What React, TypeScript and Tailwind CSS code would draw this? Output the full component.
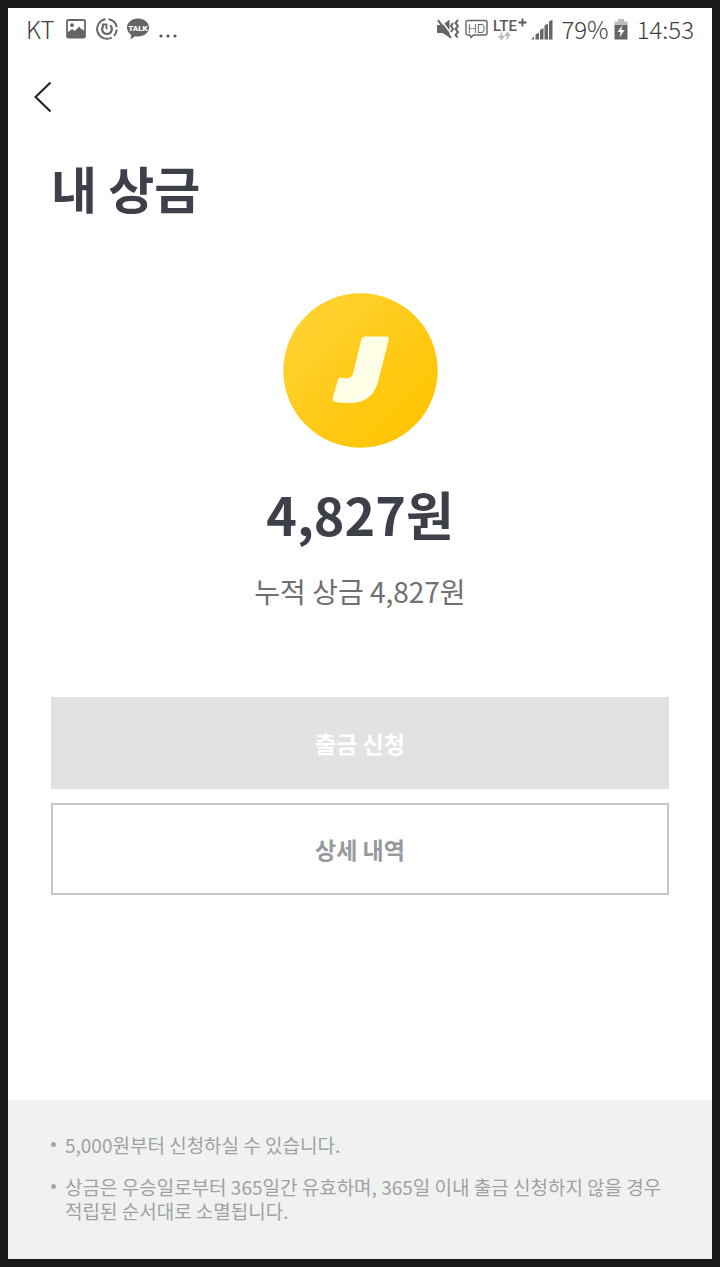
import React from 'react';

const notices = [
    '5,000원부터 신청하실 수 있습니다.',
    '상금은 우승일로부터 365일간 유효하며, 365일 이내 출금 신청하지 않을 경우 적립된 순서대로 소멸됩니다.',
];

const StatusBar = () => {
    return (
        <div className="flex h-[42px] items-center justify-between px-[18px] text-2xl leading-8 font-light text-[#404040]">
            <div className="flex items-center gap-2">
                <span className="w-8">KT</span>
                {/* Picture */}
                <svg className="h-5 w-5" viewBox="0 0 20 20" fill="none" aria-hidden="true">
                    <rect x="1" y="1" width="18" height="17.5" rx="1.2" stroke="#656565" strokeWidth="1.8" />
                    <circle cx="6" cy="6.2" r="1.9" fill="#656565" />
                    <path d="M1.5 13.5 6 10l2.8 2 4.5-4.5 2.2 3 1-.6 2 2.6V18h-17z" fill="#656565" />
                </svg>
                {/* Sync ring */}
                <svg className="ml-0.5 h-[22px] w-[22px]" viewBox="0 0 22 22" fill="none" stroke="#656565" aria-hidden="true">
                    <path d="M9.500 1.300A9.800 9.800 0 1 0 15.800 19.500M18 17.800A9.800 9.800 0 0 0 20.800 11.500M20.700 9.200A9.800 9.800 0 0 0 12.500 1.300" strokeWidth="2" />
                    <path d="M7.800 7.300a4.900 4.900 0 1 0 6.400 0" strokeWidth="2.200" />
                    <path d="M5.800 6.300h4.700v4.900" strokeWidth="1.800" />
                </svg>
                {/* Messenger */}
                <svg className="h-[22px] w-6" viewBox="0 0 24 22" aria-hidden="true">
                    <path d="M12 .5c6.3 0 11 4 11 9s-4.700 9-11 9q-1.500 0-2.800-.2L4.500 21.500l.8-4.600C2.600 15.300 1 12.600 1 9.500c0-5 4.700-9 11-9z" fill="#656565" />
                    <text x="12" y="12.500" fontSize="8" fontWeight="900" fontFamily="Roboto, sans-serif" textAnchor="middle" fill="#fff">TALK</text>
                </svg>
                <svg className="h-5 w-5" viewBox="0 0 20 20" fill="#555" aria-hidden="true">
                    <circle cx="3" cy="17" r="1.600" />
                    <circle cx="10" cy="17" r="1.600" />
                    <circle cx="17" cy="17" r="1.600" />
                </svg>
            </div>

            <div className="flex items-center gap-1">
                {/* Muted, vibrating */}
                <svg className="h-[22px] w-6" viewBox="0 0 24 22" fill="none" aria-hidden="true">
                    <path d="M0 7h5.500L12.500 1.500v18L5.500 15H0z" fill="#656565" />
                    <path d="M3.500 1.500 15.500 17.500" stroke="#fff" strokeWidth="1.400" />
                    <path d="M1 2.200 14 20" stroke="#656565" strokeWidth="2" />
                    <path d="m16 5-2 3 2 3-2 3M21 2l-2.500 3 2.500 3-2.500 3 2.500 3-2.500 3 2 2.500" stroke="#656565" strokeWidth="2" />
                </svg>
                {/* HD call */}
                <svg className="h-[22px] w-6" viewBox="0 0 24 22" fill="none" aria-hidden="true">
                    <path d="M3 2.500h17q2 0 2 2V15q0 2-2 2H8.500L6 19.500 5 17H3q-2 0-2-2V4.500q0-2 2-2z" stroke="#656565" strokeWidth="1.400" />
                    <text x="11.500" y="14.500" fontSize="13" fontFamily="Roboto, sans-serif" textAnchor="middle" fill="#444">HD</text>
                </svg>
                <svg className="h-6 w-[34px]" viewBox="0 0 34 24" fill="none" aria-hidden="true">
                    <text x="0" y="14" fontSize="15" fontWeight="500" fontFamily="Roboto, sans-serif" fill="#5a5a5a">LTE</text>
                    <path d="M29.500 1.500v8M25.500 5.500h8" stroke="#5a5a5a" strokeWidth="1.800" />
                    <path d="M8.500 15.500v6M6 19l2.500 3 2.500-3M14.500 22.500v-6M12 19l2.500-3 2.500 3" stroke="#bbb" strokeWidth="1.800" />
                </svg>
                {/* Signal */}
                <svg className="h-[22px] w-[22px]" viewBox="0 0 22 22" fill="#656565" aria-hidden="true">
                    <path d="M0 21.500 3 18.500v3zM4.500 16.500l3.500-2v7H4.500zM9 12l3.500-2v11.500H9zM13.500 7.500l3.500-2v16h-3.500zM18 3.500l3.500-2v20H18z" />
                </svg>
                <span className="ml-1">79%</span>
                {/* Battery */}
                <svg className="h-[22px] w-4" viewBox="0 0 16 22" aria-hidden="true">
                    <path d="M5 1h6v2.500h3.500V7h-13V3.500H5z" fill="#bbb" />
                    <path d="M1.500 7h13v14.500h-13z" fill="#656565" />
                    <path d="M9.500 7 4.500 14h3l-1 5.500 5-7.500h-3.200z" fill="#fff" />
                </svg>
                <span className="ml-1">14:53</span>
            </div>
        </div>
    );
};

const Coin = () => {
    return (
        <svg className="h-[155px] w-[155px]" viewBox="0 0 155 155" role="img" aria-label="상금">
            <defs>
                <linearGradient id="coin" x1="0.1" y1="0.1" x2="0.9" y2="0.9">
                    <stop offset="0" stopColor="#ffd232" />
                    <stop offset="1" stopColor="#ffc400" />
                </linearGradient>
            </defs>
            <circle cx="77.500" cy="77.500" r="77.200" fill="url(#coin)" />
            <path
                d="M82 43.500h21.500q3 0 2.300 3L95.500 87C92 101 84 110 67 110q-10 0-16-1.500-2-.6-1.500-2.500l5.500-19.500q.8-2.500 3.200-1.800c5 1.300 9.800 1.500 11.800-3.700L78.300 46.500q.8-3 3.700-3z"
                fill="#fffee6"
            />
        </svg>
    );
};

const App = () => {
    return (
        <div className="flex min-h-screen flex-col border-8 border-[#181a19] bg-white font-['Noto_Sans_CJK_KR',sans-serif] break-keep">
            <StatusBar />

            <header className="px-[22px] pt-[25px]">
                <button type="button" aria-label="뒤로" className="block p-1">
                    <svg className="h-[34px] w-5" viewBox="0 0 20 34" fill="none" aria-hidden="true">
                        <path d="M16.500 3.500 1.500 18l15 14.500" stroke="#252525" strokeWidth="2.200" />
                    </svg>
                </button>
            </header>

            <main className="flex flex-col px-[43px] pt-[38px]">
                <h1 className="text-[50px] leading-[64px] font-bold text-[#3d3f49]">내 상금</h1>

                {/* Balance */}
                <section className="mt-[74px] flex flex-col items-center">
                    <Coin />
                    <p className="mt-[34px] text-[52px] leading-[64px] font-bold text-[#3d3f49]">4,827원</p>
                    <p className="mt-[25px] text-[28px] leading-10 text-[#707070]">누적 상금 4,827원</p>
                </section>

                {/* Actions */}
                <div className="mt-[86px] flex flex-col gap-[14px] text-[23px] font-bold">
                    <button type="button" disabled className="h-[92px] bg-[#e1e2e4] text-white">출금 신청</button>
                    <button type="button" className="h-[92px] border-2 border-[#c5c6c8] text-[#98999d]">상세 내역</button>
                </div>
            </main>

            <footer className="mt-auto bg-[#f0f2f1] px-[43px] pt-[33px] pb-9 text-[19px] leading-6 text-[#a0a1a1]">
                <ul className="flex flex-col gap-[18px]">
                    {notices.map((notice) => (
                        <li key={notice} className="flex">
                            <span className="mt-[9px] mr-[9px] h-[5px] w-[5px] flex-none rounded-full bg-[#a5a6a6]" />
                            {notice}
                        </li>
                    ))}
                </ul>
            </footer>
        </div>
    );
};

export default App;
